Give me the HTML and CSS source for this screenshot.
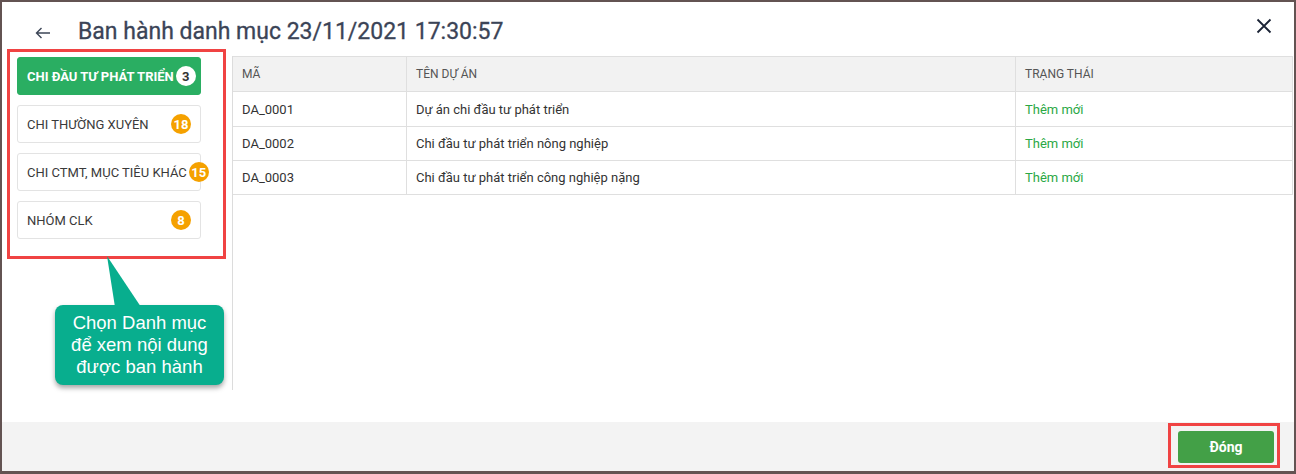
FILE: index.html
```html
<!DOCTYPE html>
<html lang="vi">
<head>
  <meta charset="UTF-8">
  <title>Ban hành danh mục</title>
  <link rel="stylesheet" href="styles.css">
</head>
<body>
  <div class="dialog">
    <div class="dialog-header">
      <span class="back-btn">
        <svg width="16" height="12" viewBox="0 0 16 12"><path d="M15 6H1.5M6.5 1L1.5 6l5 5" fill="none" stroke="#3d4657" stroke-width="1.4"/></svg>
      </span>
      <h2 class="dialog-title">Ban hành danh mục 23/11/2021 17:30:57</h2>
      <span class="close-btn">
        <svg width="16" height="16" viewBox="0 0 16 16"><path d="M1.5 1.5l13 13M14.5 1.5l-13 13" fill="none" stroke="#1b2335" stroke-width="1.8"/></svg>
      </span>
    </div>

    <div class="dialog-body">
      <div class="sidebar">
        <div class="mark">
          <div class="cat active"><span class="cat-name">CHI ĐẦU TƯ PHÁT TRIỂN</span><span class="badge">3</span></div>
          <div class="cat"><span class="cat-name">CHI THƯỜNG XUYÊN</span><span class="badge">18</span></div>
          <div class="cat"><span class="cat-name">CHI CTMT, MỤC TIÊU KHÁC</span><span class="badge">15</span></div>
          <div class="cat"><span class="cat-name">NHÓM CLK</span><span class="badge">8</span></div>
        </div>
      </div>

      <div class="panel">
        <table class="grid">
          <thead>
            <tr><th class="c-ma">MÃ</th><th class="c-ten">TÊN DỰ ÁN</th><th>TRẠNG THÁI</th></tr>
          </thead>
          <tbody>
            <tr><td>DA_0001</td><td>Dự án chi đầu tư phát triển</td><td class="st-new">Thêm mới</td></tr>
            <tr><td>DA_0002</td><td>Chi đầu tư phát triển nông nghiệp</td><td class="st-new">Thêm mới</td></tr>
            <tr><td>DA_0003</td><td>Chi đầu tư phát triển công nghiệp nặng</td><td class="st-new">Thêm mới</td></tr>
          </tbody>
        </table>
      </div>

      <div class="callout">
        <svg class="callout-tail" width="40" height="52" viewBox="0 0 40 52"><polygon points="4,1 12,52 38,52" fill="#08ae8e"/></svg>
        Chọn Danh mục<br>để xem nội dung<br>được ban hành
      </div>
    </div>

    <div class="dialog-footer">
      <span class="mark mark-btn"><button class="btn-close">Đóng</button></span>
    </div>
  </div>
</body>
</html>
```

FILE: styles.css
```css
body { margin: 0; background: #fff; font-family: Roboto, "Noto Sans", sans-serif; }

.dialog { width: 1296px; height: 474px; box-sizing: border-box; border: 2px solid #635352; border-bottom-width: 3px; display: flex; flex-direction: column; background: #fff; }

.dialog-header { height: 47px; box-sizing: border-box; padding-top: 15px; display: flex; align-items: flex-start; }
.back-btn { margin-left: 33px; margin-top: 10px; width: 16px; height: 12px; display: flex; }
.dialog-title { margin: 0 0 0 27px; font-size: 23px; line-height: 29px; font-weight: 400; color: #3b4457; -webkit-text-stroke: 0.3px #3b4457; }
.close-btn { margin-left: auto; margin-right: 22px; margin-top: 1px; width: 16px; height: 16px; display: flex; }

.dialog-body { flex: 1; display: flex; position: relative; }

.sidebar { width: 230px; flex-shrink: 0; }
.mark { border: 3px solid #f04343; }
.sidebar .mark { margin-left: 5px; width: 184px; padding: 5px 22px 17px 7px; display: flex; flex-direction: column; gap: 10px; }

.cat { height: 38px; box-sizing: border-box; border: 1px solid #e3e3e3; border-radius: 3px; padding: 0 9px; display: flex; align-items: center; gap: 2px; font-size: 13px; color: #3a3a3a; white-space: nowrap; }
.cat.active { background: #2aae62; border-color: #2aae62; color: #fff; font-weight: 700; }
.badge { margin-left: auto; flex-shrink: 0; width: 20px; height: 20px; border-radius: 50%; background: #f5a100; color: #fff; font-weight: 700; font-size: 13px; display: flex; align-items: center; justify-content: center; }
.cat.active .badge { background: #fff; color: #333; }

.panel { flex: 1; margin-top: 7px; margin-right: 1px; height: 334px; border-left: 1px solid #dcdcdc; }
.grid { width: 100%; border-collapse: collapse; font-size: 13px; color: #333; }
.grid th, .grid td { height: 33px; padding: 0 9px; border: 1px solid #dfdfdf; text-align: left; white-space: nowrap; }
.grid th { height: 34px; }
.grid tbody tr:first-child td { height: 34px; }
.grid th:first-child, .grid td:first-child { border-left: 0; }
.grid th { background: #f2f2f2; font-weight: 400; font-size: 12px; color: #555; }
.c-ma { width: 155px; }
.c-ten { width: 590px; }
.st-new { color: #2aa845; }

.callout { position: absolute; left: 53px; top: 256px; width: 169px; height: 80px; box-sizing: border-box; padding-top: 7px; background: #08ae8e; border-radius: 8px; box-shadow: 0 3px 5px rgba(0, 0, 0, 0.35); color: #fff; font-family: "Liberation Sans", Arial, sans-serif; font-size: 18.5px; line-height: 22px; text-align: center; }
.callout-tail { position: absolute; left: 48px; top: -50px; }

.dialog-footer { height: 49px; background: #f3f3f3; display: flex; justify-content: flex-end; align-items: flex-start; }
.mark-btn { margin-top: 1px; margin-right: 14px; padding: 5px 3px 2px 7px; display: flex; }
.btn-close { width: 96px; height: 32px; border: 0; border-radius: 3px; background: #43a047; color: #fff; font-family: Roboto, sans-serif; font-size: 14px; font-weight: 700; cursor: pointer; }
```
